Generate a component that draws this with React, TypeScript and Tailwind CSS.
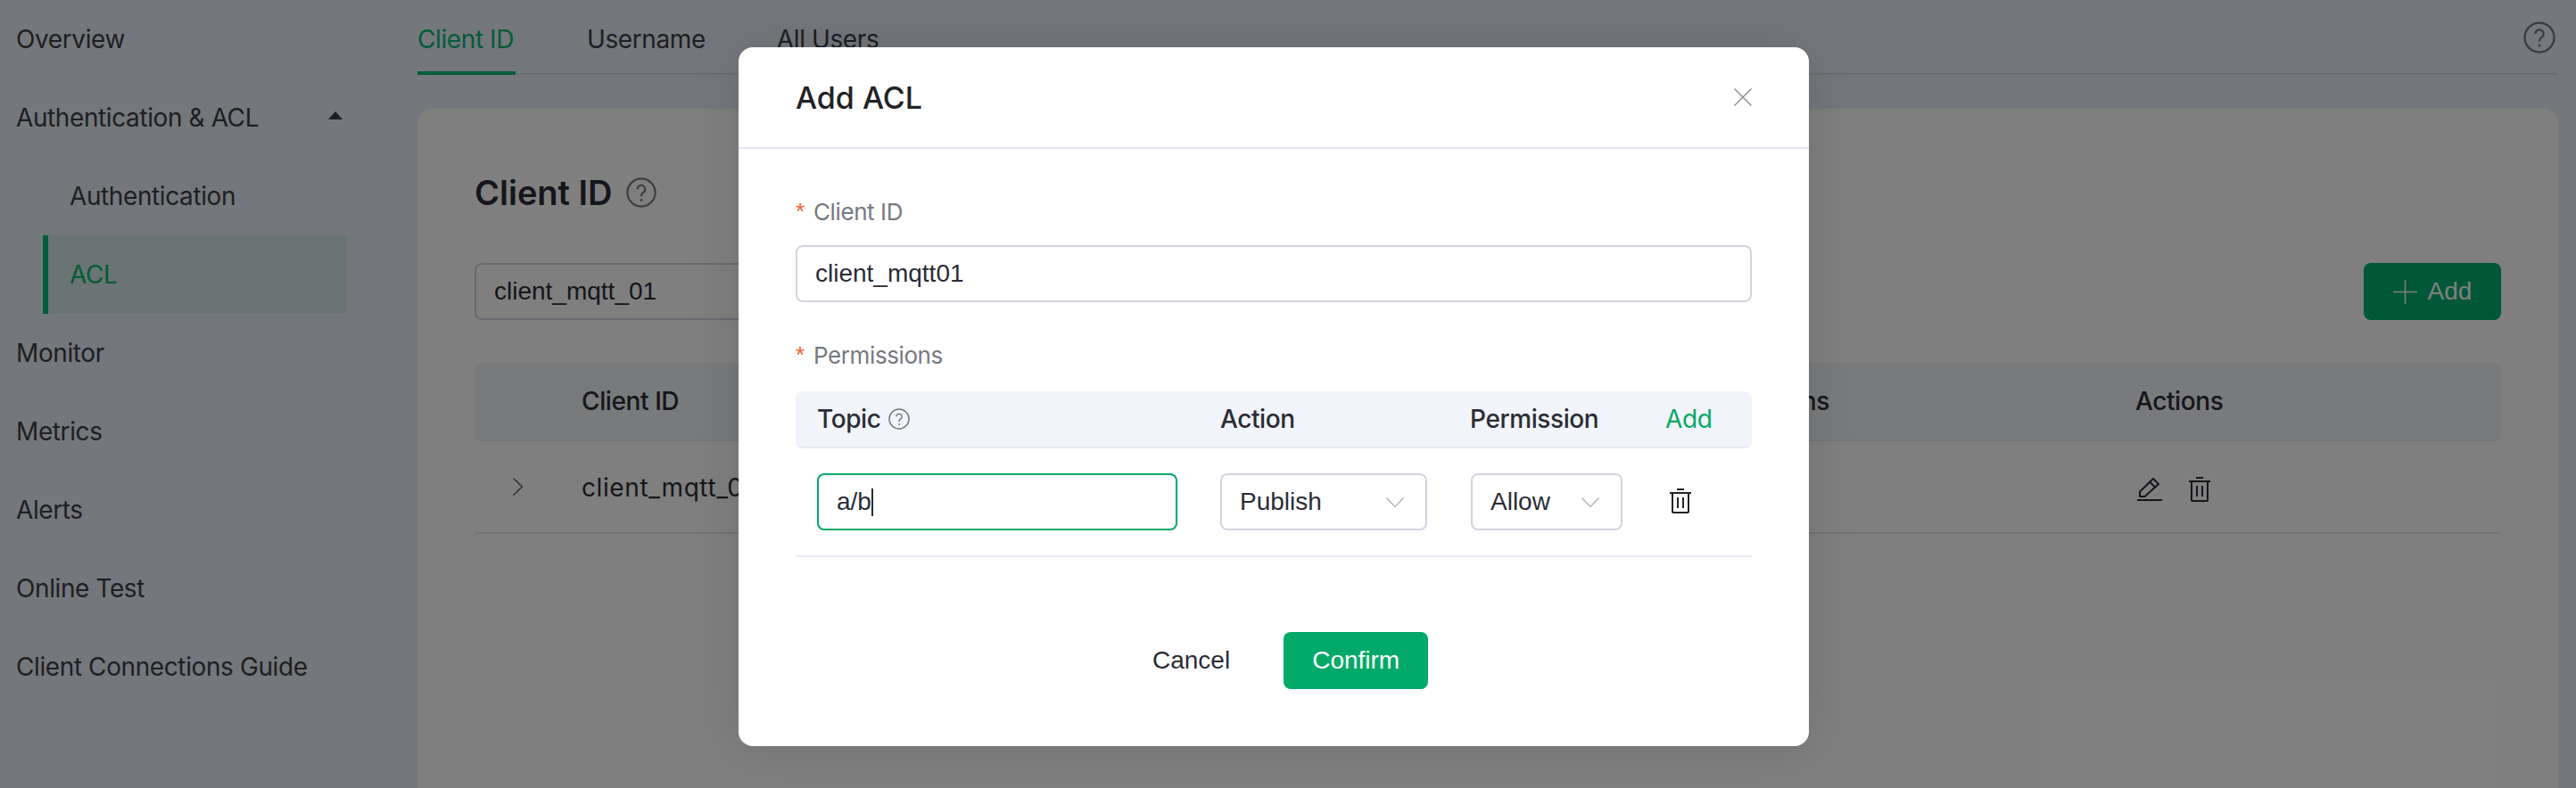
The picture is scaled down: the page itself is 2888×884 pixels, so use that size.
import React from "react";

const inter = "font-['Inter','Liberation_Sans',sans-serif]";
const arial = "font-['Liberation_Sans',sans-serif] tracking-normal";

function Help({ className }: { className: string }) {
  return (
    <svg viewBox="0 0 24 24" fill="none" stroke="currentColor" className={className}>
      <circle cx="12" cy="12" r="11" strokeWidth="1.5" />
      <path d="M8.9 9.3a3.1 3.1 0 1 1 4.8 2.6c-1.1.7-1.7 1.3-1.7 2.5v.6" strokeWidth="1.5" />
      <circle cx="12" cy="18" r="1" fill="currentColor" stroke="none" />
    </svg>
  );
}

function Trash({ className }: { className: string }) {
  return (
    <svg viewBox="0 0 24 28" fill="currentColor" className={className}>
      <rect x="8" y="0" width="8" height="2" />
      <rect x="0" y="4" width="24" height="2" />
      <path d="M3 5v21.2c0 .4.4.8.8.8h16.4c.4 0 .8-.4.8-.8V5" fill="none" stroke="currentColor" strokeWidth="2" />
      <rect x="8" y="10" width="2" height="12" />
      <rect x="14" y="10" width="2" height="12" />
    </svg>
  );
}

function Edit({ className }: { className: string }) {
  return (
    <svg viewBox="0 0 28 26" fill="none" stroke="currentColor" className={className}>
      <rect x="0" y="24" width="28" height="2" fill="currentColor" stroke="none" />
      <path d="M3 21v-5.5L18 1l6 6L8.5 21z" strokeWidth="2" strokeLinejoin="round" />
      <path d="M14.5 5l6 6" strokeWidth="2" />
    </svg>
  );
}

function Chevron({ className }: { className: string }) {
  return (
    <svg viewBox="0 0 20 11" fill="none" stroke="currentColor" className={className}>
      <path d="M.5.5l9.5 10L19.5.5" strokeWidth="1.2" />
    </svg>
  );
}

function Required({ children }: { children: string }) {
  return (
    <div className={`flex items-center h-[32px] text-[26px] text-[#77787f] ${inter}`}>
      <span className={`w-[20px] text-[#f2622a] text-[26px] leading-none ${arial}`}>*</span>
      {children}
    </div>
  );
}

function Select({ value, width, pad }: { value: string; width: string; pad: string }) {
  return (
    <div className={`${width} ${pad} h-[64px] flex items-center justify-between pl-[20px] border-2 border-[#d1d5e0] rounded-[8px] text-[28px] text-[#2a2c36] ${arial}`}>
      {value}
      <Chevron className="w-[20px] h-[11px] text-[#a9abb3]" />
    </div>
  );
}

const nav = ["Monitor", "Metrics", "Alerts", "Online Test", "Client Connections Guide"];

export default function App() {
  return (
    <div className={`relative w-[2888px] h-[884px] overflow-hidden flex bg-[#e8eef8] text-[#3c3f46] tracking-[-0.4px] ${inter}`}>
      <aside className="w-[468px] shrink-0 text-[28px]">
        <div className="h-[88px] flex items-center pl-[18px]">Overview</div>
        <div className="h-[88px] flex items-center justify-between pl-[18px] pr-[84px]">
          Authentication &amp; ACL
          <svg viewBox="0 0 16 9" className="w-[16px] h-[9px] -mt-[6px] fill-current"><path d="M8 0l8 9H0z" /></svg>
        </div>
        <div className="h-[88px] flex items-center pl-[78px]">Authentication</div>
        <div className="h-[88px] w-[340px] ml-[48px] flex items-center pl-[24px] border-l-[6px] border-[#00b874] bg-[#d6e8e8] text-[#00b874]">ACL</div>
        {nav.map((n) => (
          <div key={n} className="h-[88px] flex items-center pl-[18px]">{n}</div>
        ))}
      </aside>

      <main className="w-[2400px] shrink-0 flex flex-col">
        <div className="h-[84px] shrink-0 border-b-2 border-[#d6dae2] flex justify-between text-[28px] relative">
          <div className="flex gap-[80px]">
            <div className="w-[110px] h-[84px] -mb-[2px] pt-[8px] flex items-center border-b-4 border-[#00b874] text-[#00b874]">Client ID</div>
            <div className="h-[84px] pt-[4px] flex items-center">Username</div>
            <div className="h-[84px] pt-[4px] flex items-center">All Users</div>
          </div>
          <Help className="w-[36px] h-[36px] mt-[24px] -mr-[-3px] text-[#74767c]" />
        </div>

        <section className="mt-[38px] flex-1 bg-white rounded-t-[16px] px-[64px] pt-[70px] text-[#2a2c36]">
          <div className="h-[48px] flex items-center gap-[15px]">
            <h1 className="text-[38px] font-semibold tracking-normal">Client ID</h1>
            <Help className="w-[34px] h-[34px] text-[#77787f]" />
          </div>
          <div className="mt-[55px] h-[64px] flex justify-between">
            <input readOnly value="client_mqtt_01" className={`w-[400px] h-[64px] border-2 border-[#d1d5e0] rounded-[8px] pl-[20px] text-[28px] outline-none ${arial}`} />
            <div className={`w-[154px] h-[64px] rounded-[8px] bg-[#00b070] flex items-center justify-center gap-[12px] text-white text-[28px] ${arial}`}>
              <svg viewBox="0 0 27 27" className="w-[27px] h-[27px]" stroke="currentColor" fill="none"><path d="M13.5 0v27M0 13.5h27" strokeWidth="1.5" /></svg>
              Add
            </div>
          </div>
          <div className="mt-[48px] h-[88px] grid grid-cols-[120px_1240px_502px_1fr] items-center bg-[#f1f4f8] border-b-2 border-[#e7eaf2] rounded-[8px] text-[28px] font-medium">
            <span />
            <span>Client ID</span>
            <span>Permissions</span>
            <span>Actions</span>
          </div>
          <div className="h-[104px] grid grid-cols-[120px_1240px_502px_1fr] items-center border-b-2 border-[#e7eaf2] text-[28px]">
            <svg viewBox="0 0 11 20" className="w-[11px] h-[20px] ml-[43px] text-[#55565c]" fill="none" stroke="currentColor"><path d="M.5.5l10 9.5-10 9.5" strokeWidth="1.3" /></svg>
            <span className="mt-[2px] tracking-[0.6px]">client_mqtt_01</span>
            <span />
            <div className="flex items-center gap-[30px] mt-[6px] text-[#2a2c36]">
              <Edit className="w-[28px] h-[26px] ml-[2px]" />
              <Trash className="w-[24px] h-[28px]" />
            </div>
          </div>
        </section>
      </main>

      <div className="absolute inset-0 bg-black/50">
        <div className="absolute left-[828px] top-[53px] w-[1200px] h-[784px] bg-white rounded-[16px] shadow-[0_0_60px_rgba(0,0,0,0.12)] text-[#2a2c36]">
          <header className="h-[114px] border-b-2 border-[#e7eaf2] flex items-center justify-between pl-[64px] pr-[64px]">
            <h2 className="text-[34px] font-medium tracking-normal text-[#222326]">Add ACL</h2>
            <svg viewBox="0 0 20 20" className="w-[20px] h-[20px] text-[#8a8b90]" fill="none" stroke="currentColor"><path d="M.5.5l19 19M19.5.5l-19 19" strokeWidth="1.4" /></svg>
          </header>
          <div className="px-[64px] pt-[54px]">
            <Required>Client ID</Required>
            <input readOnly value="client_mqtt01" className={`mt-[22px] block w-full h-[64px] border-2 border-[#d1d5e0] rounded-[8px] pl-[20px] text-[28px] text-[#2a2c36] outline-none ${arial}`} />
            <div className="mt-[43px]"><Required>Permissions</Required></div>
            <div className="mt-[25px] h-[64px] flex items-center bg-[#f1f4f8] border-b-2 border-[#e7eaf2] rounded-[8px] text-[28px] font-medium">
              <div className="w-[476px] pl-[24px] flex items-center gap-[8px]">
                Topic
                <Help className="w-[24px] h-[24px] text-[#77787f]" />
              </div>
              <div className="w-[280px]">Action</div>
              <div className="w-[219px]">Permission</div>
              <div className="text-[#02a969] font-normal">Add</div>
            </div>
            <div className="h-[122px] pt-[28px] border-b-2 border-[#e7eaf2] flex items-start">
              <div className={`w-[404px] ml-[24px] h-[64px] flex items-center pl-[20px] border-2 border-[#02a969] rounded-[8px] text-[28px] ${arial}`}>
                a/b
                <span className="w-[2px] h-[31px] bg-[#2a2c36]" />
              </div>
              <div className="ml-[48px]"><Select value="Publish" width="w-[232px]" pad="pr-[24px]" /></div>
              <div className="ml-[49px]"><Select value="Allow" width="w-[170px]" pad="pr-[24px]" /></div>
              <Trash className="w-[24px] h-[28px] ml-[53px] mt-[17px] text-[#222326]" />
            </div>
            <div className="mt-[84px] pl-[400px] flex gap-[60px] items-center">
              <span className={`text-[28px] ${arial}`}>Cancel</span>
              <div className={`w-[162px] h-[64px] rounded-[8px] bg-[#02a969] text-white flex items-center justify-center text-[28px] ${arial}`}>Confirm</div>
            </div>
          </div>
        </div>
      </div>
    </div>
  );
}
